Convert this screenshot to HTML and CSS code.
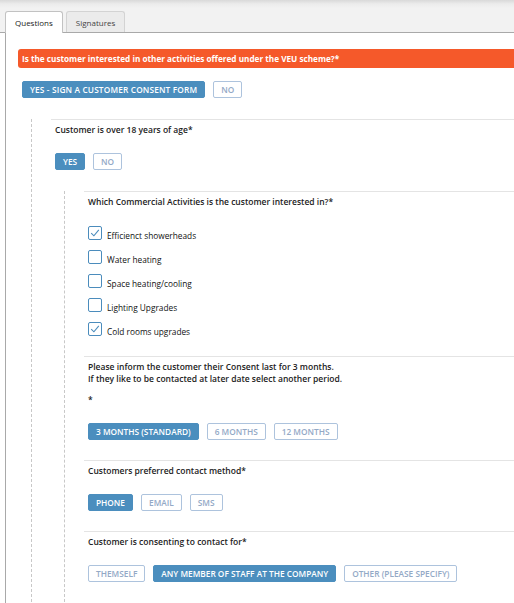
FILE: index.html
```html
<!DOCTYPE html>
<html lang="en">
<head>
<meta charset="utf-8">
<title>Questions</title>
<link rel="stylesheet" href="styles.css">
</head>
<body>
<div class="tabbar">
  <div class="tab active">Questions</div>
  <div class="tab">Signatures</div>
</div>
<div class="panel">
  <div class="q q0">
    <div class="qlabel alert">Is the customer interested in other activities offered under the VEU scheme?*</div>
    <div class="answers">
      <button class="btn on wide">YES - SIGN A CUSTOMER CONSENT FORM</button>
      <button class="btn">NO</button>
    </div>
    <div class="nest">
      <div class="q">
        <div class="qlabel">Customer is over 18 years of age*</div>
        <div class="answers">
          <button class="btn on">YES</button>
          <button class="btn">NO</button>
        </div>
        <div class="nest">
          <div class="q">
            <div class="qlabel">Which Commercial Activities is the customer interested in?*</div>
            <div class="checks">
              <label class="check"><span class="box checked"><svg viewBox="0 0 14 14" width="14" height="14"><path d="M3.2 7.2 L5.9 9.8 L10.8 3.9"/></svg></span><span class="ctext">Efficienct showerheads</span></label>
              <label class="check"><span class="box"></span><span class="ctext">Water heating</span></label>
              <label class="check"><span class="box"></span><span class="ctext">Space heating/cooling</span></label>
              <label class="check"><span class="box"></span><span class="ctext">Lighting Upgrades</span></label>
              <label class="check"><span class="box checked"><svg viewBox="0 0 14 14" width="14" height="14"><path d="M3.2 7.2 L5.9 9.8 L10.8 3.9"/></svg></span><span class="ctext">Cold rooms upgrades</span></label>
            </div>
          </div>
          <div class="q">
            <div class="qlabel">Please inform the customer their Consent last for 3 months.<br>If they like to be contacted at later date select another period.</div>
            <div class="qlabel star">*</div>
            <div class="answers">
              <button class="btn on">3 MONTHS (STANDARD)</button>
              <button class="btn">6 MONTHS</button>
              <button class="btn">12 MONTHS</button>
            </div>
          </div>
          <div class="q">
            <div class="qlabel">Customers preferred contact method*</div>
            <div class="answers">
              <button class="btn on">PHONE</button>
              <button class="btn">EMAIL</button>
              <button class="btn">SMS</button>
            </div>
          </div>
          <div class="q">
            <div class="qlabel">Customer is consenting to contact for*</div>
            <div class="answers">
              <button class="btn">THEMSELF</button>
              <button class="btn on">ANY MEMBER OF STAFF AT THE COMPANY</button>
              <button class="btn">OTHER (PLEASE SPECIFY)</button>
            </div>
          </div>
        </div>
      </div>
    </div>
  </div>
</div>
</body>
</html>
```

FILE: styles.css
```css
html, body {
  margin: 0;
  padding: 0;
  overflow: hidden;
  background: #ffffff;
}
body {
  font-family: "Open Sans", "Noto Sans", sans-serif;
  font-size: 8.5px;
  color: #222222;
}
.tabbar {
  display: flex;
  align-items: flex-end;
  gap: 3px;
  padding: 11px 0 0 5px;
  background: linear-gradient(to bottom, #d9d9d9 0px, #ececec 4px, #f2f2f2 8px, #f2f2f2 100%);
  border-bottom: 1px solid #a9a9a9;
}
.tab {
  box-sizing: border-box;
  height: 21px;
  padding: 0 9px;
  display: flex;
  align-items: center;
  font-size: 8px;
  color: #444444;
  border: 1px solid #d3d3d3;
  border-bottom: none;
  border-radius: 3px 3px 0 0;
  background: #ebebeb;
}
.tab.active {
  height: 22px;
  margin-bottom: -1px;
  background: #ffffff;
  border-color: #c2c2c2;
  color: #222222;
}
.panel {
  margin-left: 5px;
  margin-right: -20px;
  border-left: 1px solid #a9a9a9;
  padding: 16px 0 40px 12px;
}
.qlabel {
  padding: 4px 4px 0;
  line-height: 12px;
  font-size: 8.5px;
  font-weight: 600;
  color: #222222;
}
.qlabel.star {
  padding-top: 9px;
}
.qlabel.alert {
  height: 19px;
  box-sizing: border-box;
  padding: 0 4px;
  line-height: 19px;
  font-size: 8.2px;
  font-weight: 700;
  color: #ffffff;
  background: #f5592a;
  border-radius: 3px 0 0 3px;
}
.answers {
  display: flex;
  gap: 8px;
  padding-left: 4px;
  margin-top: 17px;
}
.q0 > .answers {
  margin-top: 13px;
}
.btn {
  box-sizing: border-box;
  height: 17px;
  padding: 0 7px;
  margin: 0;
  font-family: "Open Sans", "Noto Sans", sans-serif;
  font-size: 8.3px;
  font-weight: 600;
  line-height: 15px;
  color: #93a9c6;
  background: #ffffff;
  border: 1px solid #adc3dd;
  border-radius: 2px;
}
.btn.on {
  color: #ffffff;
  background: #4b8ebe;
  border-color: #4b8ebe;
}
.btn.wide {
  letter-spacing: 0.15px;
}
.nest {
  margin: 21px 0 0 13px;
  border-left: 1px dashed #c8c8c8;
  padding-left: 19px;
}
.nest > .q {
  border-top: 1px solid #e4e4e4;
  padding-bottom: 20px;
}
.checks {
  display: flex;
  flex-direction: column;
  gap: 10px;
  margin-top: 18px;
  padding-left: 4px;
}
.check {
  display: flex;
  align-items: center;
  gap: 5px;
  height: 14px;
  font-size: 8.3px;
  font-weight: 400;
  color: #111111;
}
.ctext {
  position: relative;
  top: 2px;
}
.box {
  box-sizing: border-box;
  width: 14px;
  height: 14px;
  border: 1px solid #4b8cbc;
  border-radius: 2px;
  background: #ffffff;
  display: flex;
}
.box svg {
  margin: -1px;
}
.box svg path {
  fill: none;
  stroke: #4b8cbc;
  stroke-width: 1.1;
}
```
